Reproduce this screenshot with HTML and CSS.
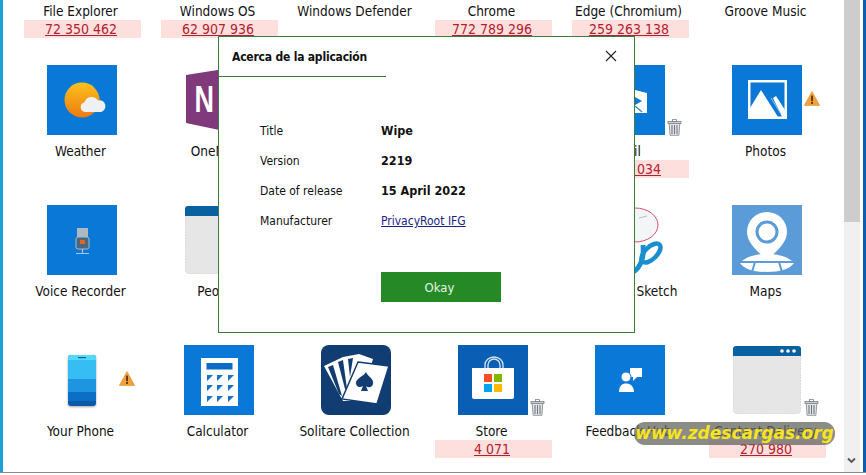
FILE: index.html
```html
<!DOCTYPE html>
<html lang="en">
<head>
  <meta charset="UTF-8">
  <meta name="viewport" content="width=device-width, initial-scale=1.0">
  <title>Wipe - Acerca de la aplicación</title>
  <link rel="stylesheet" href="styles.css">
</head>
<body>
  <svg class="sprite" width="0" height="0">
    <symbol id="trash" viewBox="0 0 15 17">
      <rect x="1" y="2.5" width="13" height="2" fill="#c9ced3" stroke="#7d8388" stroke-width=".8"/>
      <rect x="5.5" y=".6" width="4" height="2" fill="none" stroke="#7d8388" stroke-width=".8"/>
      <path d="M2.2 4.5h10.6l-.9 11.8H3.1z" fill="#e4e7ea" stroke="#7d8388" stroke-width=".8"/>
      <path d="M5 6v9M7.5 6v9M10 6v9" stroke="#6f767c" stroke-width="1.1"/>
    </symbol>
    <symbol id="warn" viewBox="0 0 16 15">
      <path d="M8 .5 15.7 14.5H.3z" fill="#f0a23a" stroke="#e0912c" stroke-width=".6"/>
      <rect x="7.1" y="4.6" width="1.9" height="5.6" fill="#6a3208"/>
      <rect x="7.1" y="11" width="1.9" height="1.9" fill="#6a3208"/>
    </symbol>
    <symbol id="window" viewBox="0 0 70 70">
      <rect x="1.5" y="1.5" width="67" height="67" rx="3" fill="#e6e6e6" stroke="#d8d8d8" stroke-dasharray="2 1"/>
      <path d="M1 11V4a3 3 0 0 1 3-3h62a3 3 0 0 1 3 3v7z" fill="#0a619f"/>
      <circle cx="50" cy="6" r="1.8" fill="#fff"/>
      <circle cx="56" cy="6" r="1.8" fill="#fff"/>
      <circle cx="62" cy="6" r="1.8" fill="#fff"/>
    </symbol>
  </svg>

  <div class="window">
    <div class="edge-left"></div>

    <div class="content">
      <div class="apps">
        <!-- first row is scrolled, icons are above the fold -->
        <div class="app">
          <div class="label">File Explorer</div>
          <a class="chip">72 350 462</a>
        </div>
        <div class="app">
          <div class="label">Windows OS</div>
          <a class="chip">62 907 936</a>
        </div>
        <div class="app">
          <div class="label">Windows Defender</div>
        </div>
        <div class="app">
          <div class="label">Chrome</div>
          <a class="chip">772 789 296</a>
        </div>
        <div class="app">
          <div class="label">Edge (Chromium)</div>
          <a class="chip">259 263 138</a>
        </div>
        <div class="app">
          <div class="label">Groove Music</div>
        </div>

        <div class="app">
          <div class="icon">
            <svg viewBox="0 0 70 70">
              <defs>
                <linearGradient id="sun" x1="0" y1="0" x2="0" y2="1">
                  <stop offset="0" stop-color="#fcc21b"/>
                  <stop offset="1" stop-color="#ee7a12"/>
                </linearGradient>
              </defs>
              <rect width="70" height="70" fill="#0a78d7"/>
              <circle cx="35" cy="35" r="17.5" fill="url(#sun)"/>
              <path d="M38 47a5 5 0 0 1-.5-9.8A7.5 7.5 0 0 1 51 35.5a5.8 5.8 0 0 1 3 11.5z" fill="#eef0f2"/>
            </svg>
          </div>
          <div class="label">Weather</div>
        </div>
        <div class="app">
          <div class="icon">
            <svg viewBox="0 0 70 70">
              <path d="M2 10 40 4V66L2 58z" fill="#80397b"/>
              <text transform="translate(10.500 47) scale(.75 1)" class="note-n">N</text>
            </svg>
          </div>
          <div class="label">OneNote</div>
        </div>
        <div class="app">
          <div class="icon"></div>
          <div class="label">Wallet</div>
        </div>
        <div class="app">
          <div class="icon"></div>
          <div class="label">Skype</div>
        </div>
        <div class="app">
          <div class="icon">
            <svg viewBox="0 0 70 70">
              <rect width="70" height="70" fill="#0a78d7"/>
              <path d="M20 20 52 28V48H20z" fill="#fff"/>
              <path d="M40 32 47 36 40 40z" fill="#0a78d7"/>
              <path d="M40 41 47 47" stroke="#3f8fc9" stroke-width="1.500"/>
            </svg>
            <svg class="badge trash"><use href="#trash"/></svg>
          </div>
          <div class="label">Mail</div>
          <a class="chip">1 270 034</a>
        </div>
        <div class="app">
          <div class="icon">
            <svg viewBox="0 0 70 70">
              <rect width="70" height="70" fill="#0a78d7"/>
              <rect x="16" y="15" width="39" height="39" fill="#fff"/>
              <rect x="18.500" y="17.500" width="34" height="34" fill="#0a78d7"/>
              <path d="M18 43 29 25 46 52H18z" fill="#fff"/>
              <path d="M41 33 44 31 53 45V52H50z" fill="#fff"/>
              <path d="M39 33 49 49" stroke="#9cc6ea" stroke-width="1"/>
            </svg>
            <svg class="badge warn"><use href="#warn"/></svg>
          </div>
          <div class="label">Photos</div>
        </div>

        <div class="app">
          <div class="icon">
            <svg viewBox="0 0 70 70">
              <rect width="70" height="70" fill="#0a78d7"/>
              <rect x="30" y="23" width="11" height="14" fill="#aeb9c4"/>
              <rect x="29" y="32" width="13" height="12" rx="2" fill="#4a6680" stroke="#a5b8c9"/>
              <rect x="33" y="35" width="5" height="4" fill="#d9682a"/>
              <path d="M35.500 44v4M29 48.500h13" stroke="#a5c5e2" stroke-width="1.200"/>
            </svg>
          </div>
          <div class="label">Voice Recorder</div>
        </div>
        <div class="app">
          <div class="icon"><svg viewBox="0 0 70 70"><use href="#window"/></svg></div>
          <div class="label">People</div>
        </div>
        <div class="app">
          <div class="icon"></div>
          <div class="label">Camera</div>
        </div>
        <div class="app">
          <div class="icon"></div>
          <div class="label">Movies</div>
        </div>
        <div class="app">
          <div class="icon">
            <svg viewBox="0 0 70 70" fill="none">
              <ellipse cx="40" cy="20" rx="23" ry="17" fill="#f3f5f6" stroke="#d0536b" stroke-width="1"/>
              <path d="M44 13 52 11" stroke="#b9bfc3"/>
              <ellipse cx="56" cy="48" rx="12" ry="6" transform="rotate(-45 56 48)" stroke="#1a8fcf" stroke-width="4.500"/>
              <path d="M48 40C49 50 47 62 38 67" stroke="#1a8fcf" stroke-width="5"/>
            </svg>
          </div>
          <div class="label">Snip and Sketch</div>
        </div>
        <div class="app">
          <div class="icon">
            <svg viewBox="0 0 70 70">
              <rect width="70" height="70" fill="#5b9bd8"/>
              <path d="M8 58C12 53 20 50 30 49L35 55 40 49C50 50 58 53 62 58 58 64 48 67 35 67S12 64 8 58z" fill="#fff"/>
              <path d="M8 57 62 57M23 57 20 67M47 57 50 67" stroke="#5b9bd8" stroke-width="2" fill="none"/>
              <path d="M35 55C26 47 15 38 15 27a20 20 0 0 1 40 0C55 38 44 47 35 55z" fill="#fff"/>
              <circle cx="35" cy="27" r="10" fill="none" stroke="#5b9bd8" stroke-width="3"/>
            </svg>
          </div>
          <div class="label">Maps</div>
        </div>

        <div class="app">
          <div class="icon">
            <svg viewBox="0 0 70 70" class="phone">
              <rect x="21" y="10" width="28" height="51" rx="3" fill="#0a5aa8"/>
              <path d="M21 47H49V56H21z" fill="#0b6fc6"/>
              <path d="M21 34H49V47H21z" fill="#1e95e0"/>
              <path d="M21 15H49V34H21z" fill="#35bdf4"/>
              <path d="M21 15V13a3 3 0 0 1 3-3H46a3 3 0 0 1 3 3v2z" fill="#52daf8"/>
              <rect x="31" y="12" width="8" height="1.200" fill="#0a5aa8"/>
            </svg>
            <svg class="badge warn"><use href="#warn"/></svg>
          </div>
          <div class="label">Your Phone</div>
        </div>
        <div class="app">
          <div class="icon">
            <svg viewBox="0 0 70 70">
              <rect width="70" height="70" fill="#0a78d7"/>
              <rect x="17" y="13" width="37" height="48" fill="#fff"/>
              <rect x="22.500" y="18" width="26" height="6.500" fill="#0a6cc4"/>
              <path d="M23 30h6l-6 6zM33 30h6l-6 6zM44 30h6l-6 6zM23 40h6l-6 6zM33 40h6l-6 6zM44 40h6l-6 6zM23 51h6l-6 6zM33 51h6l-6 6zM44 51h6l-6 6z" fill="#1773c9"/>
            </svg>
          </div>
          <div class="label">Calculator</div>
        </div>
        <div class="app">
          <div class="icon">
            <svg viewBox="0 0 70 70">
              <rect width="70" height="70" rx="8" fill="#123d73"/>
              <path d="M3 21 22 12 38 9 52 14 40 56 22 56z" fill="#fff"/>
              <path d="M7 22 12 20 21 51 18 49zM17 17 22 15 26 44 24 44zM27 14 32 13 29 32z" fill="#123d73"/>
              <path d="M37 17 68 21 56 59 21 54z" fill="#fff" stroke="#123d73" stroke-width="1.500"/>
              <path d="M45 27C47 32 53 33 52 39 51 43 47 43 45 41L47 46H40L42 41C39 43 35 42 35 38 35 33 42 32 45 27z" fill="#123d73"/>
            </svg>
          </div>
          <div class="label">Solitare Collection</div>
        </div>
        <div class="app">
          <div class="icon">
            <svg viewBox="0 0 70 70">
              <rect width="70" height="70" fill="#0a5fb4"/>
              <path d="M27 24V20a9 8 0 0 1 18 0v4M30 24V20a6 6 0 0 1 12 0v4" fill="none" stroke="#d5e6f4" stroke-width="1.300"/>
              <path d="M14 23H56V52a2 2 0 0 1-2 2H16a2 2 0 0 1-2-2z" fill="#fff"/>
              <rect x="26" y="29" width="8" height="8" fill="#f25022"/>
              <rect x="36" y="29" width="8" height="8" fill="#7fba00"/>
              <rect x="26" y="39" width="8" height="8" fill="#00a4ef"/>
              <rect x="36" y="39" width="8" height="8" fill="#ffb900"/>
            </svg>
            <svg class="badge trash"><use href="#trash"/></svg>
          </div>
          <div class="label">Store</div>
          <a class="chip">4 071</a>
        </div>
        <div class="app">
          <div class="icon">
            <svg viewBox="0 0 70 70">
              <rect width="70" height="70" fill="#0a78d7"/>
              <path d="M35 23H47V32H42L38 36V32H35z" fill="#fff"/>
              <circle cx="31" cy="32" r="5" fill="#fff" stroke="#0a78d7"/>
              <path d="M24 47C24 41 27 38.500 31 38.500S39 41 39 47z" fill="#fff"/>
            </svg>
          </div>
          <div class="label">Feedback Hub</div>
        </div>
        <div class="app">
          <div class="icon">
            <svg viewBox="0 0 70 70"><use href="#window"/></svg>
            <svg class="badge trash"><use href="#trash"/></svg>
          </div>
          <div class="label">Content Delivery</div>
          <a class="chip">270 980</a>
        </div>
      </div>
    </div>

    <div class="scrollbar">
      <div class="thumb"></div>
      <svg class="scroll-down" width="9" height="7" viewBox="0 0 9 7">
        <path d="M1 1.500 4.500 5 8 1.500" fill="none" stroke="#555" stroke-width="1.800"/>
      </svg>
    </div>
    <div class="edge-gap"></div>
    <div class="edge-right"></div>
  </div>

  <div class="about">
    <div class="about-head">Acerca de la aplicación</div>
    <svg class="about-close" width="12" height="12" viewBox="0 0 12 12">
      <path d="M1 1 11 11M11 1 1 11" stroke="#222" stroke-width="1.100"/>
    </svg>
    <div class="about-body">
      <div class="info">
        <span>Title</span><b>Wipe</b>
        <span>Version</span><b>2219</b>
        <span>Date of release</span><b>15 April 2022</b>
        <span>Manufacturer</span><a>PrivacyRoot IFG</a>
      </div>
      <button class="okay">Okay</button>
    </div>
  </div>

  <div class="watermark">www.zdescargas.org</div>
</body>
</html>
```

FILE: styles.css
```css
* {
  margin: 0;
  padding: 0;
  box-sizing: border-box;
}

body {
  position: relative;
  height: 475px;
  overflow: hidden;
  background: #fff;
  color: #111;
  font-family: "DejaVu Sans", Tahoma, sans-serif;
  font-stretch: condensed;
  font-size: 14px;
}

.sprite {
  position: absolute;
}

/* App window */
.window {
  display: flex;
  height: 473px;
  border-bottom: 1px solid #8a8a8a;
}

.edge-left {
  width: 3px;
  background: #1a9fd8;
}

.edge-gap {
  width: 3px;
}

.edge-right {
  width: 3px;
  background: #0b5fb0;
}

.content {
  width: 841px;
  overflow: hidden;
  padding-left: 11px;
}

/* App grid */
.apps {
  display: grid;
  grid-template-columns: repeat(6, 137px);
  grid-template-rows: 65px repeat(3, 140px);
}

.app:nth-child(-n+6) {
  padding-top: 3px;
}

.icon {
  position: relative;
  width: 70px;
  height: 70px;
  margin: 0 0 8px 33px;
}

.icon > svg:first-child {
  display: block;
  width: 70px;
  height: 70px;
}

.badge {
  position: absolute;
}

.trash {
  left: 72px;
  top: 54px;
  width: 15px;
  height: 17px;
}

.warn {
  left: 72px;
  top: 26px;
  width: 16px;
  height: 15px;
}

.phone {
  filter: drop-shadow(0 1px 1px rgba(0, 0, 0, 0.35));
}

.note-n {
  font-family: "Liberation Sans", sans-serif;
  font-size: 36px;
  font-weight: 700;
  fill: #fff;
}

.label {
  height: 16px;
  padding-right: 4px;
  font-size: 13.5px;
  line-height: 17px;
  text-align: center;
  white-space: nowrap;
}

.chip {
  display: block;
  width: 117px;
  height: 18px;
  margin: 1px 0 0 10px;
  padding-right: 3px;
  background: #fde0de;
  color: #b3202e;
  line-height: 18px;
  text-align: center;
  text-decoration: underline;
}

/* Scrollbar */
.scrollbar {
  position: relative;
  width: 16px;
  background: #f0f0f0;
}

.thumb {
  height: 222px;
  background: #cdcdcd;
}

.scroll-down {
  position: absolute;
  left: 3px;
  bottom: 8px;
}

/* About dialog */
.about {
  position: absolute;
  left: 218px;
  top: 36px;
  width: 417px;
  height: 297px;
  background: #fff;
  border: 1px solid #3f7a3f;
  font-size: 12px;
}

.about-head {
  width: 167px;
  height: 40px;
  padding-left: 13px;
  border-bottom: 1px solid #3f7a3f;
  font-weight: 700;
  letter-spacing: -0.2px;
  line-height: 41px;
  white-space: nowrap;
}

.about-close {
  position: absolute;
  right: 17px;
  top: 13px;
}

.about-body {
  padding: 38px 0 0 41px;
}

.info {
  display: grid;
  grid-template-columns: 121px auto;
  grid-auto-rows: 30px;
  align-items: center;
}

.info span,
.info a {
  padding-top: 2px;
}

.info b {
  font-size: 12.5px;
}

.info a {
  color: #1a2382;
  text-decoration: underline;
}

.okay {
  display: block;
  width: 120px;
  height: 30px;
  margin: 37px 0 0 121px;
  border: none;
  background: #258a26;
  color: #e6f2e6;
  font: inherit;
  font-size: 13px;
  padding-right: 3px;
}

/* Site watermark */
.watermark {
  position: absolute;
  left: 634px;
  top: 422px;
  width: 201px;
  height: 23px;
  border-radius: 11px;
  background: rgba(100, 100, 95, 0.75);
  color: #f6e41c;
  font-size: 17px;
  font-stretch: normal;
  font-style: italic;
  font-weight: 700;
  line-height: 23px;
  text-align: center;
  white-space: nowrap;
}
```
